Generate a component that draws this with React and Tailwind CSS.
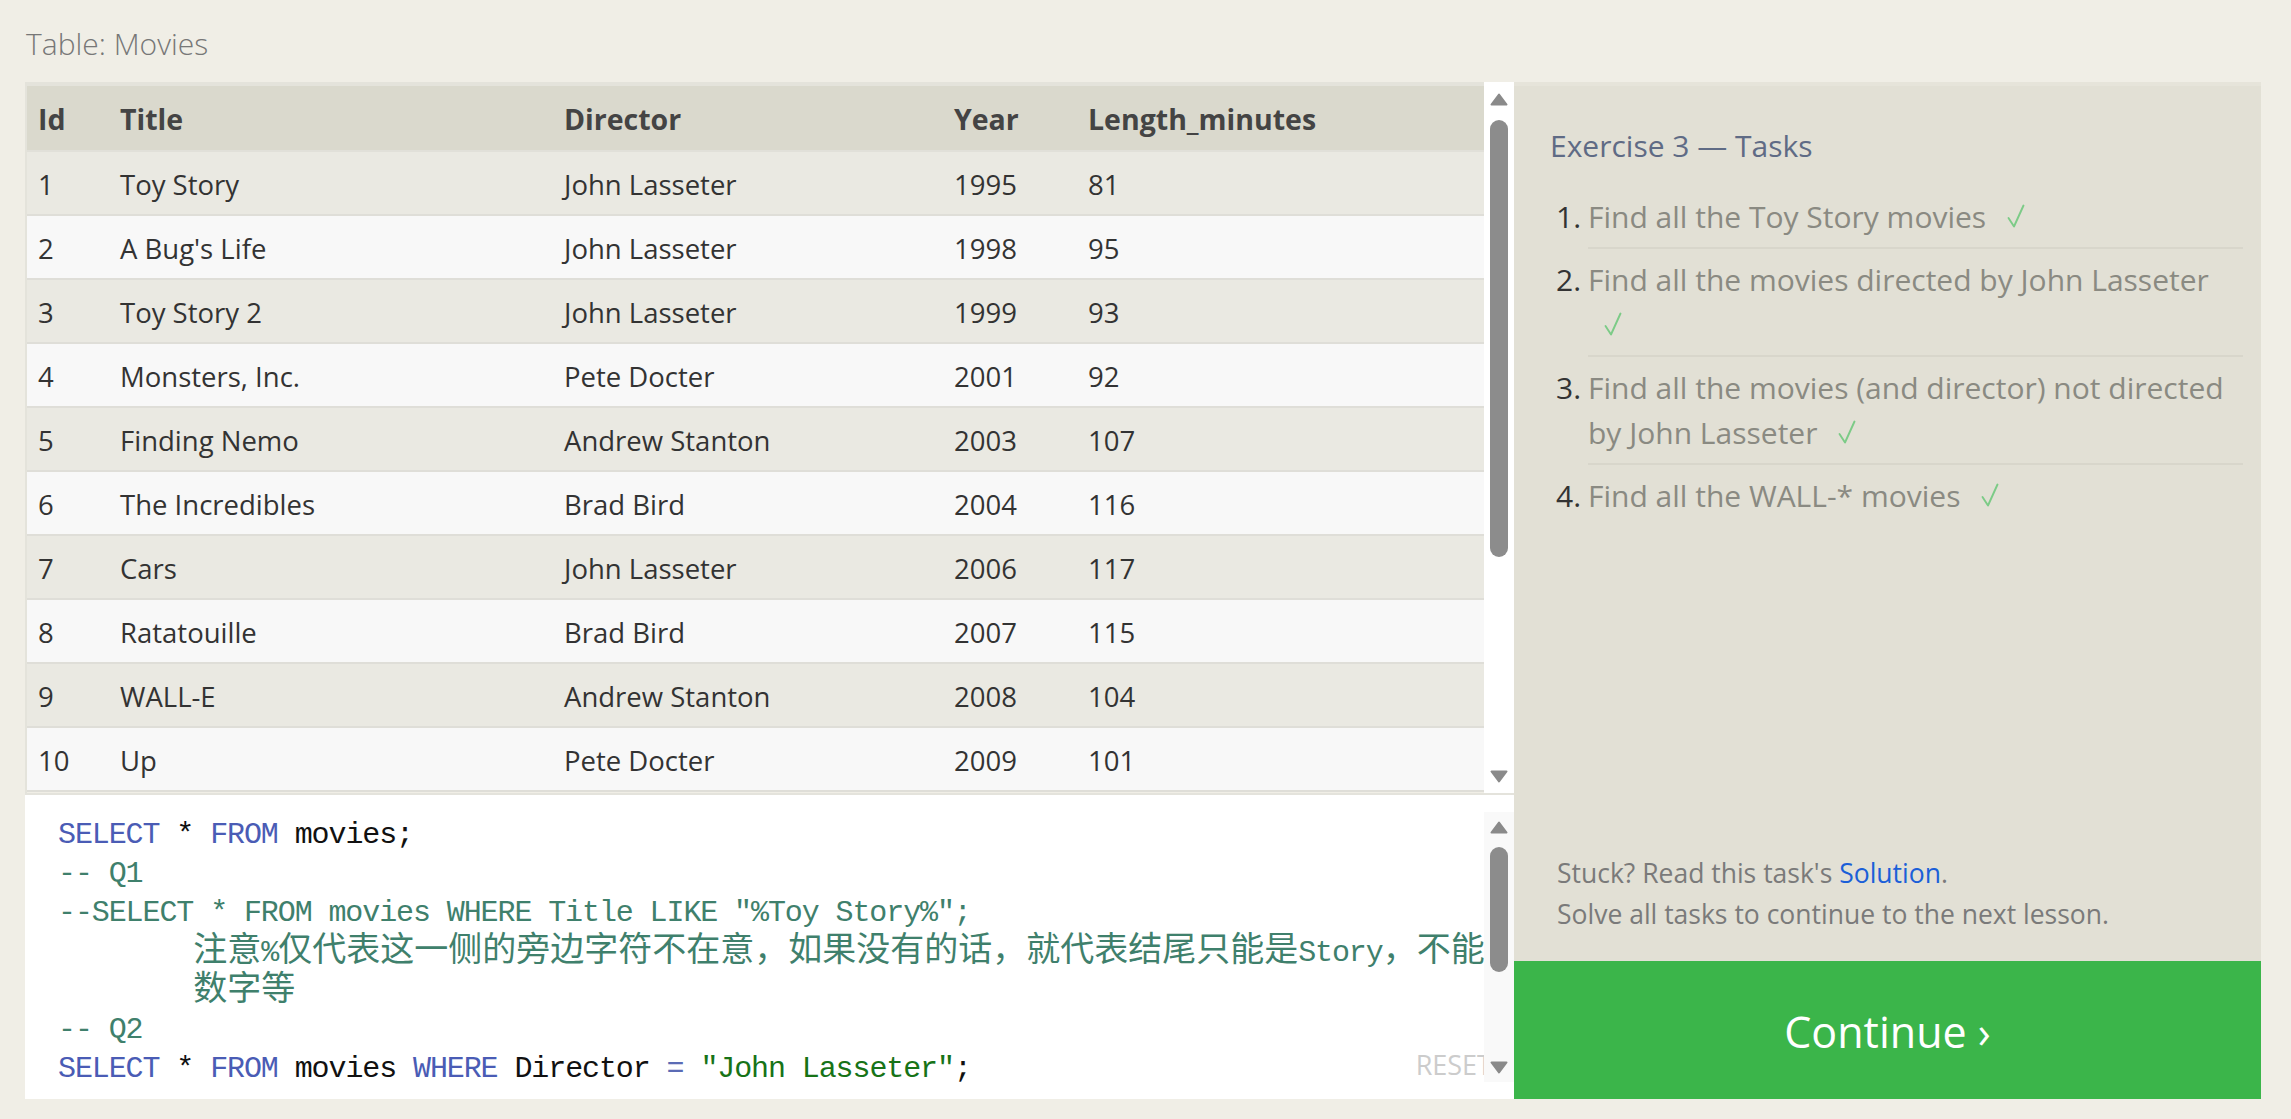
import React from "react";

const rows = [
  [1, "Toy Story", "John Lasseter", 1995, 81],
  [2, "A Bug's Life", "John Lasseter", 1998, 95],
  [3, "Toy Story 2", "John Lasseter", 1999, 93],
  [4, "Monsters, Inc.", "Pete Docter", 2001, 92],
  [5, "Finding Nemo", "Andrew Stanton", 2003, 107],
  [6, "The Incredibles", "Brad Bird", 2004, 116],
  [7, "Cars", "John Lasseter", 2006, 117],
  [8, "Ratatouille", "Brad Bird", 2007, 115],
  [9, "WALL-E", "Andrew Stanton", 2008, 104],
  [10, "Up", "Pete Docter", 2009, 101],
];

function Up() {
  return (
    <svg width="18" height="13" viewBox="0 0 18 13">
      <path d="M9 1.5 L16.5 11.5 L1.5 11.5 Z" fill="#8a8a8a" stroke="#8a8a8a" strokeWidth="2" strokeLinejoin="round" />
    </svg>
  );
}
function Down() {
  return (
    <svg width="18" height="13" viewBox="0 0 18 13">
      <path d="M1.5 1.5 L16.5 1.5 L9 11.5 Z" fill="#8a8a8a" stroke="#8a8a8a" strokeWidth="2" strokeLinejoin="round" />
    </svg>
  );
}

const K = ({ children }) => <span className="text-[#4a5cb5]">{children}</span>;
const B = ({ children }) => <span className="text-[#111111]">{children}</span>;
const Cm = ({ children }) => <span className="text-[#3f806c]">{children}</span>;
const S = ({ children }) => <span className="text-[#177317]">{children}</span>;
const Z = ({ children }) => (
  <span className="font-['Noto_Sans_CJK_SC',sans-serif] text-[34px] tracking-normal">{children}</span>
);

function Line({ children }) {
  return <div className="h-[39px] leading-[39px] whitespace-pre overflow-visible">{children}</div>;
}

function Check({ className = "ml-[20px]" }) {
  return (
    <svg className={"inline-block align-baseline " + className} width="20" height="24" viewBox="0 0 20 24">
      <path d="M2.5 14 L8 22.5 L17.5 1.5" fill="none" stroke="#7ccb87" strokeWidth="1.9" strokeLinecap="round" strokeLinejoin="round" />
    </svg>
  );
}

export default function App() {
  return (
    <div className="w-[2291px] h-[1119px] bg-[#f0eee6] overflow-hidden font-['Open_Sans',sans-serif] pt-[25px]">
      <div className="pl-[26px] h-[38px] leading-[38px] text-[30px] font-light text-[#777777]">Table: Movies</div>
      <div className="mt-[19px] ml-[25px] w-[2236px] h-[1017px] flex">
        {/* left column */}
        <div className="w-[1489px] flex flex-col">
          <div className="h-[711px] flex">
            <div className="w-[1459px] border-l-2 border-t-4 border-[#e4e3db] overflow-hidden text-[27.5px] text-[#333333]">
              <div className="grid grid-cols-[82px_444px_390px_134px_1fr] h-[66px] pt-[3px] bg-[#dad9cd] border-b-2 border-[#e1e0d9] items-center font-bold text-[28.5px] text-[#444444]">
                <div className="pl-[11px]">Id</div>
                <div className="pl-[11px]">Title</div>
                <div className="pl-[11px]">Director</div>
                <div className="pl-[11px]">Year</div>
                <div className="pl-[11px]">Length_minutes</div>
              </div>
              {rows.map((r, i) => (
                <div
                  key={r[0]}
                  className={
                    "grid grid-cols-[82px_444px_390px_134px_1fr] h-[64px] pt-[4px] border-b-2 border-[#dfded8] items-center " +
                    (i % 2 === 0 ? "bg-[#eae9e2]" : "bg-[#f8f8f8]")
                  }
                >
                  {r.map((c, j) => (
                    <div key={j} className="pl-[11px]">{c}</div>
                  ))}
                </div>
              ))}
            </div>
            <div className="w-[30px] bg-white flex flex-col items-center pt-[11px] pb-[10px]">
              <Up />
              <div className="mt-[14px] w-[18px] h-[437px] rounded-full bg-[#8c8c8c]" />
              <div className="flex-1" />
              <Down />
            </div>
          </div>
          <div className="h-[2px] bg-[#e4e3dc]" />
          <div className="relative flex-1 bg-white overflow-hidden pl-[33px] pt-[21px] font-['Liberation_Mono',monospace] text-[30px] tracking-[-1.1px]">
            <Line><K>SELECT</K> <B>*</B> <K>FROM</K> <B>movies;</B></Line>
            <Line><Cm>-- Q1</Cm></Line>
            <Line><Cm>--SELECT * FROM movies WHERE Title LIKE "%Toy Story%";</Cm></Line>
            <Line>
              <span className="relative -top-[6px]">
                <Cm>
                  {"        "}<Z>注意</Z>%<Z>仅代表这一侧的旁边字符不在意，如果没有的话，就代表结尾只能是</Z>Story<Z>，不能有</Z>
                </Cm>
              </span>
            </Line>
            <Line>
              <span className="relative -top-[6px]">
                <Cm>{"        "}<Z>数字等</Z></Cm>
              </span>
            </Line>
            <Line><Cm>-- Q2</Cm></Line>
            <Line>
              <K>SELECT</K> <B>*</B> <K>FROM</K> <B>movies</B> <K>WHERE</K> <B>Director</B> <span className="text-[#5b6bb5]">=</span> <S>"John Lasseter"</S><B>;</B>
            </Line>
            <div className="absolute right-[22px] bottom-[17px] h-[34px] leading-[34px] font-['Open_Sans',sans-serif] tracking-normal text-[27px] text-[#cccccc]">
              RESET
            </div>
            <div className="absolute right-0 top-[17px] bottom-[17px] w-[30px] bg-[#f9f9f9] flex flex-col items-center pt-[9px] pb-[8px]">
              <Up />
              <div className="mt-[13px] w-[18px] h-[125px] rounded-full bg-[#8c8c8c]" />
              <div className="flex-1" />
              <Down />
            </div>
          </div>
        </div>
        {/* right column */}
        <div className="w-[747px] bg-[#e2e0d5] border-t-4 border-[#e6e4da] flex flex-col">
          <div className="flex-1 pl-[36px] pr-[18px] pt-[40px]">
            <div className="h-[40px] leading-[40px] text-[30px] text-[#5f6b85]">Exercise 3 — Tasks</div>
            <ol className="mt-[20px] pl-[6px] text-[30px]">
              <li className="flex">
                <span className="w-[32px] py-[8px] leading-[45px] text-[#333333]">1.</span>
                <div className="flex-1 py-[8px] leading-[45px] border-b-2 border-[#d8d6cb] text-[#8a8a82]">
                  Find all the Toy Story movies<Check />
                </div>
              </li>
              <li className="flex">
                <span className="w-[32px] py-[8px] leading-[45px] text-[#333333]">2.</span>
                <div className="flex-1 py-[8px] leading-[45px] border-b-2 border-[#d8d6cb] text-[#8a8a82]">
                  <div className="whitespace-nowrap">Find all the movies directed by John Lasseter</div>
                  <div><Check className="ml-[15px]" /></div>
                </div>
              </li>
              <li className="flex">
                <span className="w-[32px] py-[8px] leading-[45px] text-[#333333]">3.</span>
                <div className="flex-1 py-[8px] leading-[45px] border-b-2 border-[#d8d6cb] text-[#8a8a82]">
                  <div className="whitespace-nowrap">Find all the movies (and director) not directed</div>
                  <div className="whitespace-nowrap">by John Lasseter<Check /></div>
                </div>
              </li>
              <li className="flex">
                <span className="w-[32px] py-[8px] leading-[45px] text-[#333333]">4.</span>
                <div className="flex-1 py-[8px] leading-[45px] text-[#8a8a82]">
                  Find all the WALL-* movies<Check />
                </div>
              </li>
            </ol>
          </div>
          <div className="pl-[43px] pb-[26px] text-[26.5px] leading-[41px] text-[#7a7a7a]">
            <div>
              Stuck? Read this task's <span className="text-[#1b5fd8]">Solution</span>.
            </div>
            <div>Solve all tasks to continue to the next lesson.</div>
          </div>
          <div className="h-[138px] pt-[5px] bg-[#3bb54a] flex items-center justify-center text-white text-[43px]">
            Continue ›
          </div>
        </div>
      </div>
    </div>
  );
}
